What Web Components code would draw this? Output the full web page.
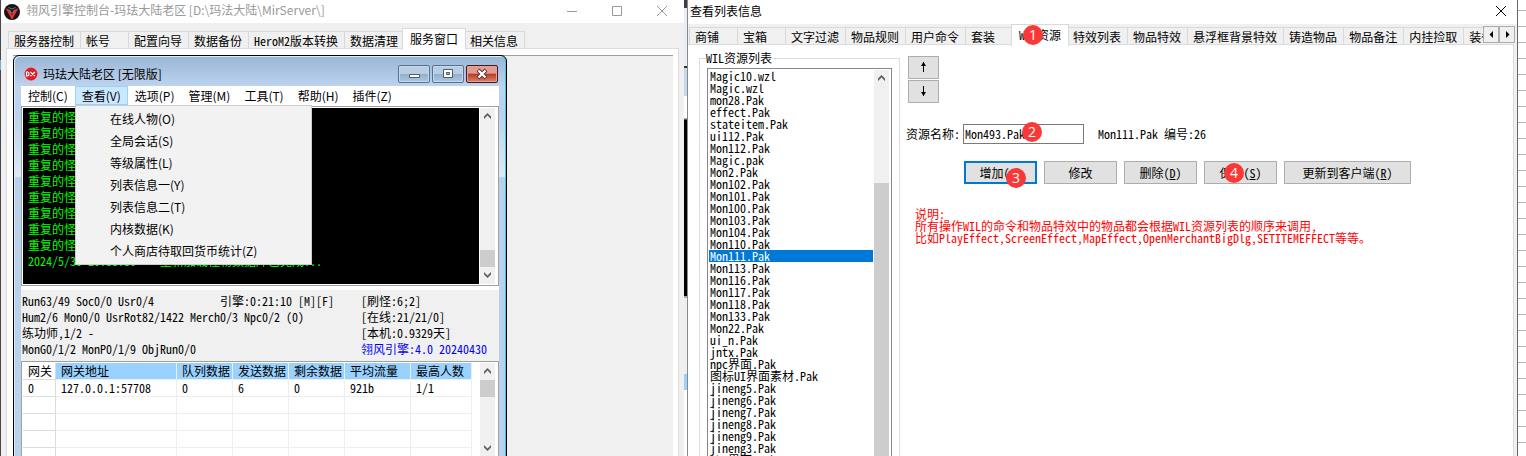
<!DOCTYPE html>
<html lang="zh-CN">
<head>
<meta charset="utf-8">
<title>翎风引擎控制台</title>
<style>
html,body{margin:0;height:100%}
body{font:12px/16px "Noto Sans Mono CJK SC","Noto Sans CJK SC",sans-serif;color:#000;background:#fff;overflow:hidden}
</style>
</head>
<body>
<desk-top>
  <console-window></console-window>
  <list-window></list-window>
</desk-top>

<script>
const UI = '"Noto Sans CJK SC",sans-serif';
const BASE = '*{box-sizing:border-box}ul{list-style:none;margin:0;padding:0}button,input{font:inherit;color:inherit;margin:0}';
function define(name, css, html) {
  customElements.define(name, class extends HTMLElement {
    constructor() {
      super();
      const root = this.attachShadow({mode: 'open'});
      root.innerHTML = '<style>' + BASE + css + '</style>' + (typeof html === 'function' ? html(this) : html);
    }
  });
}

/* Desktop: two windows side by side over slivers of what lies behind. */
define('desk-top', `
:host{display:grid;grid-template-columns:1px 683fr 3px 830fr 9px;height:100vh;overflow:hidden}
::slotted(*){min-width:0}
.l{background:linear-gradient(#4a4650 60px,#7fa6cc 60px 70px,#4a4650 70px)}
.m{background:linear-gradient(#3d3d4a 8px,#e8eef4 8px 66px,#333 66px 68px,#c5d8ee 68px 96px,#fff 96px 118px,#aaa 118px 119px,#000 120px 296px,#aaa 296px 298px,#efefef 298px 374px,#99d1ff 374px 390px,#fff 390px)}
.r{border-left:1px solid #66666a;background:repeating-linear-gradient(#fff 0 10px,#b5b5b5 10px 11px,#fff 11px 16px)}
slot{display:contents}`,
`<div class="l"></div><slot name="a"></slot><div class="m"></div><slot name="b"></slot><div class="r"></div>`);

define('tab-item', `
:host{display:block;flex:none;height:17px;min-width:48px;padding:1px 6px 0 5px;border:1px solid #d9d9d9;border-width:1px 0 0 1px;background:#f0f0f0;line-height:17px;white-space:nowrap;position:relative;box-sizing:border-box}
:host(:last-of-type){border-right-width:1px}
button{border:0;background:none;padding:0;line-height:16px;display:block}
:host([on]){height:22px;margin:-3px -2px 0;padding:2px 7px 0;z-index:1;background:#fff;border-width:1px 1px 0;margin-bottom:-1px}`,
`<button role="tab"><slot></slot></button><slot name="badge"></slot>`);

define('tab-strip', `
:host{display:flex;align-items:flex-start;height:17px;padding-left:2px;position:relative}`,
`<slot></slot>`);

define('scroll-bar', `
:host{display:flex;flex-direction:column;width:17px;background:#f0f0f0;border:solid #fff;border-width:0 1px;box-sizing:border-box}
svg{display:block;flex:none;width:15px;height:17px}
.track{flex:1;display:flex;flex-direction:column}
.before{flex:var(--before,0) 1 0}
.thumb{flex:var(--size,0 0 17px);background:#cdcdcd}
.after{flex:var(--after,0) 1 0}`,
`<svg viewBox="0 0 15 17"><path d="M4 11V8.500L7.500 5 11 8.500V11L7.500 7.500z" fill="#606060"/></svg>
<div class="track"><div class="before"></div><div class="thumb"></div><div class="after"></div></div>
<svg viewBox="0 0 15 17"><path d="M4 5V7.500L7.500 11 11 7.500V5L7.500 8.500z" fill="#606060"/></svg>`);

define('step-badge', `
:host{position:absolute;z-index:3;width:20px;height:20px;border-radius:50%;background:#fb3838;color:#fff;font:14px/20px "Open Sans",sans-serif;text-align:center}`,
`<slot></slot>`);

/* Left: the engine console */
define('log-view', `
:host{display:flex;height:180px;border:1px solid #a0a0a0;border-width:1px 1px 1px 1px;background:#fff;padding:1px 2px 1px 1px}
.log{flex:1;background:#000;color:#0f0;padding:1px 0 0 5px;min-width:0;overflow:hidden;border-right:0}
p{margin:0;white-space:pre}
scroll-bar{--before:1;--after:0}`,
`<div class="log" role="log">${'<p>重复的怪物名称</p>'.repeat(9)}<p>2024/5/30 20:33:30    重新加载怪物数据库已完成...</p></div><scroll-bar></scroll-bar>`);

define('status-panel', `
:host{display:grid;grid-template-columns:198px 141px 1fr;background:#f0f0f0;margin-top:4px;padding:3px 0 4px 1px;white-space:pre}
.wide{grid-column:span 2}
.v{color:#00f}`,
`<span>Run63/49 Soc0/0 Usr0/4</span><span>引擎:0:21:10 [M][F]</span><span>[刷怪:6;2]</span>
<span class="wide">Hum2/6 Mon0/0 UsrRot82/1422 Merch0/3 Npc0/2 (0)</span><span>[在线:21/21/0]</span>
<span class="wide">练功师,1/2 -</span><span>[本机:0.9329天]</span>
<span class="wide">MonG0/1/2 MonP0/1/9 ObjRun0/0</span><span class="v">翎风引擎:4.0 20240430</span>`.replace(/\n/g, ''));

const cols = [33, 121, 56, 56, 56, 66, 61];
define('gateway-table', `
:host{display:flex;justify-content:space-between;border:1px solid #a0a0a0;background:#fff;padding:1px 2px 0 1px;height:120px;overflow:hidden}
table{border-collapse:separate;border-spacing:0;table-layout:fixed;width:449px}
th,td{height:17px;padding:0 0 0 5px;text-align:left;font-weight:400;line-height:16px;border:solid #eee;border-width:0 1px 1px 0;white-space:nowrap;overflow:hidden}
th{background:#99d1ff}
th:first-child{background:#fff}
th:first-child,td:first-child{border-color:#dcdcdc}
scroll-bar{height:94px;--before:0;--after:1}`,
`<table><colgroup>${cols.map(w => `<col style="width:${w}px">`).join('')}</colgroup>
<thead><tr>${['网关','网关地址','队列数据','发送数据','剩余数据','平均流量','最高人数'].map(t => `<th>${t}</th>`).join('')}</tr></thead>
<tbody><tr>${['0','127.0.0.1:57708','0','6','0','921b','1/1'].map(t => `<td>${t}</td>`).join('')}</tr>
${('<tr>' + '<td></td>'.repeat(7) + '</tr>').repeat(5)}</tbody></table><scroll-bar></scroll-bar>`);

define('menu-bar', `
:host{display:block;position:relative;background:#fff;height:20px;font-family:${UI}}
.bar{display:flex}
.bar button{border:1px solid transparent;background:none;padding:0 6px;height:19px;line-height:17px;white-space:nowrap}
.bar button.on{background:#cce8ff;border-color:#99d1ff}
ul{position:absolute;z-index:2;left:54px;top:19px;width:237px;background:#f2f2f2;border:1px solid #ccc;padding:2px}
li button{display:block;width:100%;height:22px;line-height:20px;border:0;background:none;text-align:left;padding:0 0 0 32px}`,
`<div class="bar" role="menubar">${['控制(C)','查看(V)','选项(P)','管理(M)','工具(T)','帮助(H)','插件(Z)'].map((t,i) => `<button role="menuitem"${i===1?' class="on" aria-expanded="true"':''}>${t}</button>`).join('')}</div>
<ul role="menu">${['在线人物(O)','全局会话(S)','等级属性(L)','列表信息一(Y)','列表信息二(T)','内核数据(K)','个人商店待取回货币统计(Z)'].map(t => `<li role="none"><button role="menuitem">${t}</button></li>`).join('')}</ul>`);

define('mdi-window', `
:host{display:flex;flex-direction:column;background:linear-gradient(#9ab5d5,#bdd3ee 30px,#bcd2ec 60px,#dde9f6 120px 121px,#bad1ea 121px);border:1px solid #000;border-right-color:#000;box-shadow:inset -1px 0 #3cc8e8,inset 1px 1px #dcebf8;border-radius:6px 6px 0 0;padding:0 7px}
header{display:flex;align-items:center;height:30px;font-family:${UI};padding:5px 1px 0 3px;gap:5px}
.logo{width:14px;height:14px}
h2{font:inherit;margin:0;flex:1;line-height:16px}
.caps{display:flex;gap:2px;align-self:flex-start;padding-top:4px}
.caps button{width:32px;height:18px;padding:0;border:1px solid #56718f;border-radius:2px;box-shadow:inset 0 0 0 1px #c5d8ec;background:linear-gradient(#bacde3 50%,#93aeca 50%,#b0c8e0)}
.caps .x{border-color:#4a1420;box-shadow:inset 0 0 0 1px #e2a39a;background:linear-gradient(#e09c90 45%,#b93b24 50%,#d9836e)}
.caps svg{display:block;margin:auto;width:16px;height:14px}
.body{background:#fff;flex:1}`,
`<header><svg class="logo" viewBox="0 0 14 14"><circle cx="7" cy="7" r="7" fill="#e5b5b8"/><circle cx="7" cy="7" r="6.400" fill="#d8202c"/><path d="M2.500 5v4h1q1.500 0 1.500-2t-1.500-2zM6.500 5l4.500 4M11 5L6.500 9" fill="none" stroke="#fff" stroke-width="1.200"/></svg>
<h2>玛珐大陆老区 [无限版]</h2><div class="caps">
<button aria-label="最小化"><svg viewBox="0 0 16 14"><path d="M3.500 7.500h10v3h-10z" fill="#fff" stroke="#4b5b70"/></svg></button>
<button aria-label="还原"><svg viewBox="0 0 16 14"><path d="M3.500 2.500h9v8h-9z" fill="#fff" stroke="#4b5b70"/><path d="M6.500 5.500h3v2h-3z" fill="#9fb6d0" stroke="#4b5b70"/></svg></button>
<button class="x" aria-label="关闭"><svg viewBox="0 0 16 14"><path d="M4 3l8 8M12 3l-8 8" stroke="#5b2a2a" stroke-width="4"/><path d="M4.500 3.500l7 7M11.500 3.500l-7 7" stroke="#fff" stroke-width="2.400"/></svg></button>
</div></header><div class="body"><slot></slot></div>`);

define('console-window', `
:host{display:flex;flex-direction:column;background:#f0f0f0;min-width:0;grid-column:2;grid-row:1}
header{display:flex;align-items:center;height:23px;background:#fff;color:#999;font-family:${UI};padding-left:3px;flex:none}
.logo{width:16px;height:16px;margin-right:6px}
h1{font:inherit;margin:0 auto 0 0;line-height:20px;padding-bottom:3px}
header button{border:0;background:none;padding:0;width:45px;height:22px}
header button svg{display:block;margin:auto;width:12px;height:20px}
tab-strip{margin:8px 0 0 5px}
.page{flex:1;margin:0 5px 0 5px;border:1px solid #dcdcdc;border-bottom:0;background:#fff;padding:6px 5px 0 6px;min-height:0}
.mdi{display:grid;grid-template-columns:493fr 166fr;height:100%;background:#f0f0f0;border-top:1px solid #a0a0a0}
mdi-window{margin-top:-1px}`,
`<header><svg class="logo" viewBox="0 0 16 16"><circle cx="8" cy="8" r="8" fill="#1a1416"/><path d="M1.500 4l5 2.500L8 12l1.500-5.500 5-2.500L8.500 15h-1z" fill="#e8323a"/><path d="M4.500 3.500L8 5l3.500-1.500M5 5.500l3 4 3-4" fill="none" stroke="#777"/></svg>
<h1>翎风引擎控制台-玛珐大陆老区 [D:\\玛法大陆\\MirServer\\]</h1>
<button aria-label="最小化"><svg viewBox="0 0 12 20"><path d="M1 9.500h10" stroke="#999"/></svg></button>
<button aria-label="最大化"><svg viewBox="0 0 12 20"><path d="M1.500 4.500h9v9h-9z" fill="none" stroke="#999"/></svg></button>
<button aria-label="关闭"><svg viewBox="0 0 12 20"><path d="M1 4l10 10M11 4L1 14" stroke="#999"/></svg></button></header>
<tab-strip role="tablist"><tab-item>服务器控制</tab-item><tab-item>帐号</tab-item><tab-item>配置向导</tab-item><tab-item>数据备份</tab-item><tab-item>HeroM2版本转换</tab-item><tab-item>数据清理</tab-item><tab-item on>服务窗口</tab-item><tab-item>相关信息</tab-item></tab-strip>
<div class="page"><div class="mdi"><mdi-window><menu-bar></menu-bar><log-view></log-view><status-panel></status-panel><gateway-table></gateway-table></mdi-window></div></div>`);

/* Right: the list editor */
const files = ['Magic10.wzl','Magic.wzl','mon28.Pak','effect.Pak','stateitem.Pak','ui112.Pak','Mon112.Pak','Magic.pak','Mon2.Pak','Mon102.Pak','Mon101.Pak','Mon100.Pak','Mon103.Pak','Mon104.Pak','Mon110.Pak','Mon111.Pak','Mon113.Pak','Mon116.Pak','Mon117.Pak','Mon118.Pak','Mon133.Pak','Mon22.Pak','ui_n.Pak','jntx.Pak','npc界面.Pak','图标UI界面素材.Pak','jineng5.Pak','jineng6.Pak','jineng7.Pak','jineng8.Pak','jineng9.Pak','jineng3.Pak','ch5界面.Pak'];
define('list-box', `
:host{display:flex;border:1px solid #828790;border-bottom:0;background:#fff;padding:1px 1px 0;min-height:0;overflow:hidden}
ul{flex:1}
li{line-height:12px;height:12px;padding-left:1px;white-space:nowrap}
li[aria-selected]{background:#0078d7;color:#fff}
scroll-bar{--before:96;--size:300 1 0;--after:0;margin-bottom:-17px}`,
`<ul role="listbox" aria-label="WIL资源列表">${files.map(f => `<li role="option"${f==='Mon111.Pak'?' aria-selected="true"':''}>${f}</li>`).join('')}</ul><scroll-bar></scroll-bar>`);

define('group-box', `
:host{display:block;min-height:0}
fieldset{margin:0;height:100%;min-width:0;border:1px solid #dcdcdc;border-bottom:0;padding:2px 7px 0;display:flex;flex-direction:column}
legend{line-height:16px;padding:0;margin-left:-1px}
::slotted(*){height:100%}`,
`<fieldset><legend><slot name="legend"></slot></legend><slot></slot></fieldset>`);

define('push-button', `
:host{display:block;position:relative;width:73px;height:23px}
:host([square]){width:31px}
:host([wide]){width:127px}
button{width:100%;height:100%;border:1px solid #adadad;background:#e1e1e1;padding:0;line-height:19px;white-space:nowrap;display:block}
:host([default]) button{border:2px solid #0078d7;line-height:17px}
svg{display:block;margin:auto}`,
`<button><slot></slot></button><slot name="badge"></slot>`);

define('resource-form', `
:host{display:block;padding-top:5px}
.move{display:grid;gap:1px;padding:1px 0 0 2px;justify-content:start}
.row{display:flex;align-items:center;margin-top:21px;height:20px;position:relative}
.row label{width:57px;white-space:nowrap}
input{width:121px;height:20px;border:1px solid #7a7a7a;background:#fff;padding:0 1px 2px;outline:0}
output{margin-left:14px;white-space:nowrap}
.acts{display:flex;gap:7px;margin:17px 0 0 58px}
.note{color:#f00;line-height:12px;margin:24px 8px 0 9px}
.note p{margin:0}
.b2{left:116px;top:-2px}.b3{left:42px;top:7px}.b4{left:20px;top:2px}`,
`<div class="move"><push-button square><svg width="9" height="12" viewBox="0 0 9 12"><path d="M4.500 1v10" stroke="#000"/><path d="M2 5l2.500-4L7 5z"/></svg></push-button>
<push-button square><svg width="9" height="12" viewBox="0 0 9 12"><path d="M4.500 1v10" stroke="#000"/><path d="M2 7l2.500 4L7 7z"/></svg></push-button></div>
<div class="row"><label for="n">资源名称:</label><input id="n" value="Mon493.Pak"><output>Mon111.Pak 编号:26</output><step-badge class="b2">2</step-badge></div>
<div class="acts"><push-button default>增加(<u>A</u>)<step-badge slot="badge" class="b3">3</step-badge></push-button><push-button>修改</push-button><push-button>删除(<u>D</u>)</push-button><push-button>保存(<u>S</u>)<step-badge slot="badge" class="b4">4</step-badge></push-button><push-button wide>更新到客户端(<u>R</u>)</push-button></div>
<div class="note"><p>说明:</p><p>所有操作WIL的命令和物品特效中的物品都会根据WIL资源列表的顺序来调用,</p><p>比如PlayEffect,ScreenEffect,MapEffect,OpenMerchantBigDlg,SETITEMEFFECT等等。</p></div>`);

define('list-window', `
:host{display:flex;flex-direction:column;background:#f0f0f0;min-width:0;overflow:hidden;grid-column:4;grid-row:1;border-left:1px solid #8a8a8a;position:relative}
header{display:flex;justify-content:space-between;align-items:center;height:24px;padding:0 10px 2px 2px;background:#fff;font-family:${UI};flex:none}
h1{font:inherit;margin:0}
header button{border:0;background:none;padding:0;width:12px;height:12px}
header svg{display:block}
.tabs{display:flex;margin-top:2px;height:18px;flex:none}
tab-strip{flex:1;min-width:0;overflow:hidden;margin-top:-2px;padding-top:3px;height:22px;padding-left:1px;z-index:1}
.spin{display:flex;flex:none;padding-right:2px}
.spin button{width:16px;height:17px;border:1px solid #adadad;background:#f0f0f0;padding:0}
.spin svg{display:block;margin:auto}
.page{flex:1;min-height:0;display:grid;grid-template-columns:201px 1fr;gap:6px;background:#fff;margin-right:3px;border:solid #dcdcdc;border-width:1px 1px 0 0;padding:5px 0 0 11px}
.b1{left:11px;top:0}`,
`<header><h1>查看列表信息</h1><button aria-label="关闭"><svg width="12" height="12" viewBox="0 0 12 12"><path d="M1 1l10 10M11 1L1 11" stroke="#000"/></svg></button></header>
<div class="tabs"><tab-strip role="tablist"><tab-item>商铺</tab-item><tab-item>宝箱</tab-item><tab-item>文字过滤</tab-item><tab-item>物品规则</tab-item><tab-item>用户命令</tab-item><tab-item>套装</tab-item><tab-item on>WIL资源<step-badge slot="badge" class="b1">1</step-badge></tab-item><tab-item>特效列表</tab-item><tab-item>物品特效</tab-item><tab-item>悬浮框背景特效</tab-item><tab-item>铸造物品</tab-item><tab-item>物品备注</tab-item><tab-item>内挂捡取</tab-item><tab-item>装备</tab-item></tab-strip>
<div class="spin"><button aria-label="向左"><svg width="7" height="7" viewBox="0 0 7 7"><path d="M5 0v7L1.500 3.500z"/></svg></button><button aria-label="向右"><svg width="7" height="7" viewBox="0 0 7 7"><path d="M2 0v7l3.500-3.500z"/></svg></button></div></div>
<div class="page"><group-box><span slot="legend">WIL资源列表</span><list-box></list-box></group-box><resource-form></resource-form></div>`);

/* Place both windows in their desktop slots. */
document.querySelector('console-window').slot = 'a';
document.querySelector('list-window').slot = 'b';
</script>
</body>
</html>
